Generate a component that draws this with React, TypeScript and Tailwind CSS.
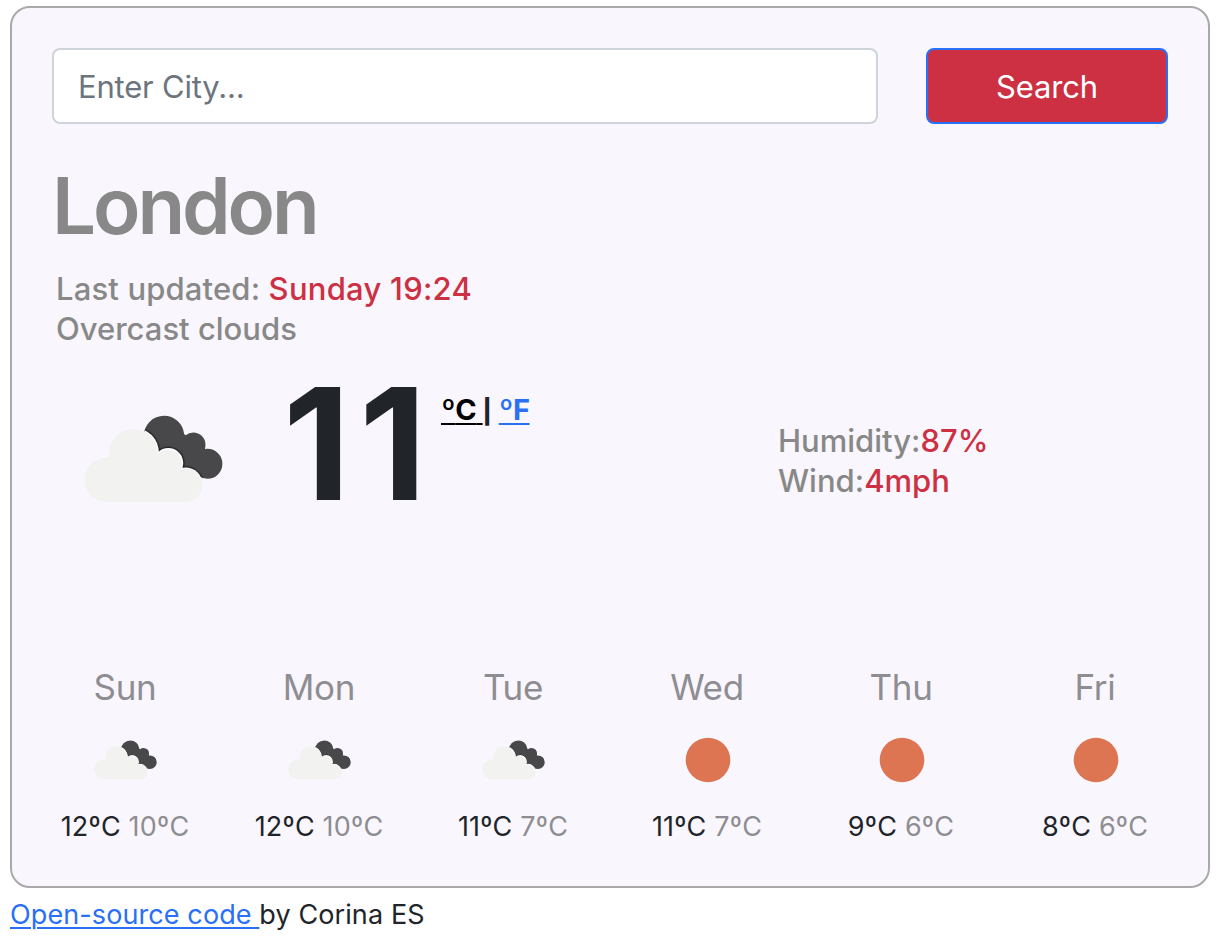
import React from "react";

type Condition = "clouds" | "sun";

const forecast: { day: string; icon: Condition; max: string; min: string }[] = [
  { day: "Sun", icon: "clouds", max: "12ºC", min: "10ºC" },
  { day: "Mon", icon: "clouds", max: "12ºC", min: "10ºC" },
  { day: "Tue", icon: "clouds", max: "11ºC", min: "7ºC" },
  { day: "Wed", icon: "sun", max: "11ºC", min: "7ºC" },
  { day: "Thu", icon: "sun", max: "9ºC", min: "6ºC" },
  { day: "Fri", icon: "sun", max: "8ºC", min: "6ºC" },
];

function Clouds({ className, id }: { className: string; id: string }) {
  return (
    <svg viewBox="84 415 139 88" className={className} aria-hidden="true">
      <defs>
        <clipPath id={id}>
          <circle cx="164" cy="436" r="20.2" />
          <circle cx="193.3" cy="444.7" r="12.2" />
          <circle cx="207.4" cy="463.8" r="15" />
          <path d="M164 456 L184 434 L193 440 L205 448 L207 478.7 L180 470Z" />
        </clipPath>
        <filter id={id + "s"} x="-20%" y="-20%" width="140%" height="140%">
          <feGaussianBlur stdDeviation="1.2" />
        </filter>
      </defs>
      <g clipPath={`url(#${id})`}>
        <rect x="84" y="415" width="139" height="88" fill="#48484a" />
        <g fill="#0c0c0c" filter={`url(#${id}s)`}>
          <circle cx="134" cy="452.7" r="25.4" />
          <circle cx="168.3" cy="463" r="15.4" />
          <circle cx="185.4" cy="484.8" r="17.8" />
        </g>
        <g fill="#fdfcff">
          <circle cx="134" cy="452.7" r="24.9" />
          <circle cx="168.3" cy="463" r="14.9" />
          <circle cx="185.4" cy="484.8" r="17.3" />
        </g>
      </g>
      <g fill="#f2f2f0">
        <circle cx="106.3" cy="479.7" r="22" />
        <circle cx="133.4" cy="453" r="24.1" />
        <circle cx="167.6" cy="463.8" r="13.9" />
        <circle cx="185.8" cy="485.1" r="16.6" />
        <path d="M106 457.8 L150 450 L177 473 L186 485 V501.7 H106Z" />
      </g>
    </svg>
  );
}

export default function App() {
  return (
    <div className="h-[940px] w-[1222px] overflow-hidden bg-white pt-1.5 pr-3 pl-2.5 font-['Inter',sans-serif] text-[#212529]">
      <main className="flex h-[882px] flex-col rounded-[20px] border-2 border-[#a9a9a9] bg-[#f9f7fd] px-10 pt-10">
        <form className="flex h-[76px] shrink-0 gap-12" onSubmit={(e) => e.preventDefault()}>
          <input
            type="text"
            placeholder="Enter City..."
            className="w-[826px] shrink-0 rounded-lg border-2 border-[#ced4da] bg-white px-6 pt-0.5 text-[31px] tracking-[-0.2px] outline-none placeholder:text-[#6c757d]"
          />
          <button className="w-[242px] shrink-0 rounded-lg border-2 border-[#2a70f6] bg-[#cc3042] pt-0.5 text-[31px] tracking-[-0.15px] text-white">
            Search
          </button>
        </form>

        <h1 className="mt-[34px] h-24 text-[78px] leading-[96px] font-[570] tracking-[-3.1px] text-[#888]">London</h1>
        <div className="mt-[15px] pl-1 text-[31px] leading-10 font-medium text-[#888]">
          <div className="tracking-[0.15px]">
            Last updated: <span className="tracking-[0.25px] text-[#cc3042]">Sunday 19:24</span>
          </div>
          <div>Overcast clouds</div>
        </div>

        <section className="mt-6 flex h-[240px] shrink-0 pl-8">
          <Clouds id="now" className="mt-[42px] h-[88px] w-[139px] shrink-0" />
          <div className="ml-[60px] w-[158px] shrink-0 text-[156px] leading-[142px] font-bold tracking-[9px]">11</div>
          <div className="w-[337px] shrink-0 pt-[19px] text-[29px] leading-9 font-bold tracking-[-0.5px] whitespace-pre">
            <a className="text-black underline decoration-2 underline-offset-[3px]">
              <span className="font-black">º</span>C{" "}
            </a>
            <span className="text-[24px] font-extrabold">|</span>{" "}
            <a className="ml-px text-[#2a70f6] underline decoration-2 underline-offset-[3px]">
              <span className="font-black">º</span>F
            </a>
          </div>
          <div className="pt-[48px] text-[31px] leading-10 font-medium whitespace-nowrap text-[#888]">
            <div>
              Humidity:<span className="text-[#cc3042]">87%</span>
            </div>
            <div>
              Wind:<span className="text-[#cc3042]">4mph</span>
            </div>
          </div>
        </section>

        <section className="-mx-6 mt-[47px] grid grid-cols-6 text-center">
          {forecast.map((f) => (
            <div key={f.day} className="flex flex-col items-center">
              <div className="h-[54px] text-[35px] leading-[54px] tracking-[-0.3px] text-[#8e8d92]">{f.day}</div>
              <div className="flex h-[91px] w-full items-center justify-center">
                {f.icon === "clouds" ? (
                  <Clouds id={f.day} className="h-10 w-[63px]" />
                ) : (
                  <svg viewBox="0 0 46 46" className="ml-px size-[46px]" aria-hidden="true">
                    <circle cx="23" cy="23" r="22.3" fill="#dd7552" />
                  </svg>
                )}
              </div>
              <div className="mt-px h-[42px] text-[27px] leading-[42px] tracking-[0.2px] whitespace-nowrap">
                {f.max} <span className="text-[#8e8d92]">{f.min}</span>
              </div>
            </div>
          ))}
        </section>
      </main>
      <footer className="mt-1.5 text-[27px] leading-[42px] tracking-[0.1px] whitespace-pre">
        <a className="text-[#2a70f6] underline decoration-2 underline-offset-[3px]">Open-source code </a>by Corina ES
      </footer>
    </div>
  );
}
